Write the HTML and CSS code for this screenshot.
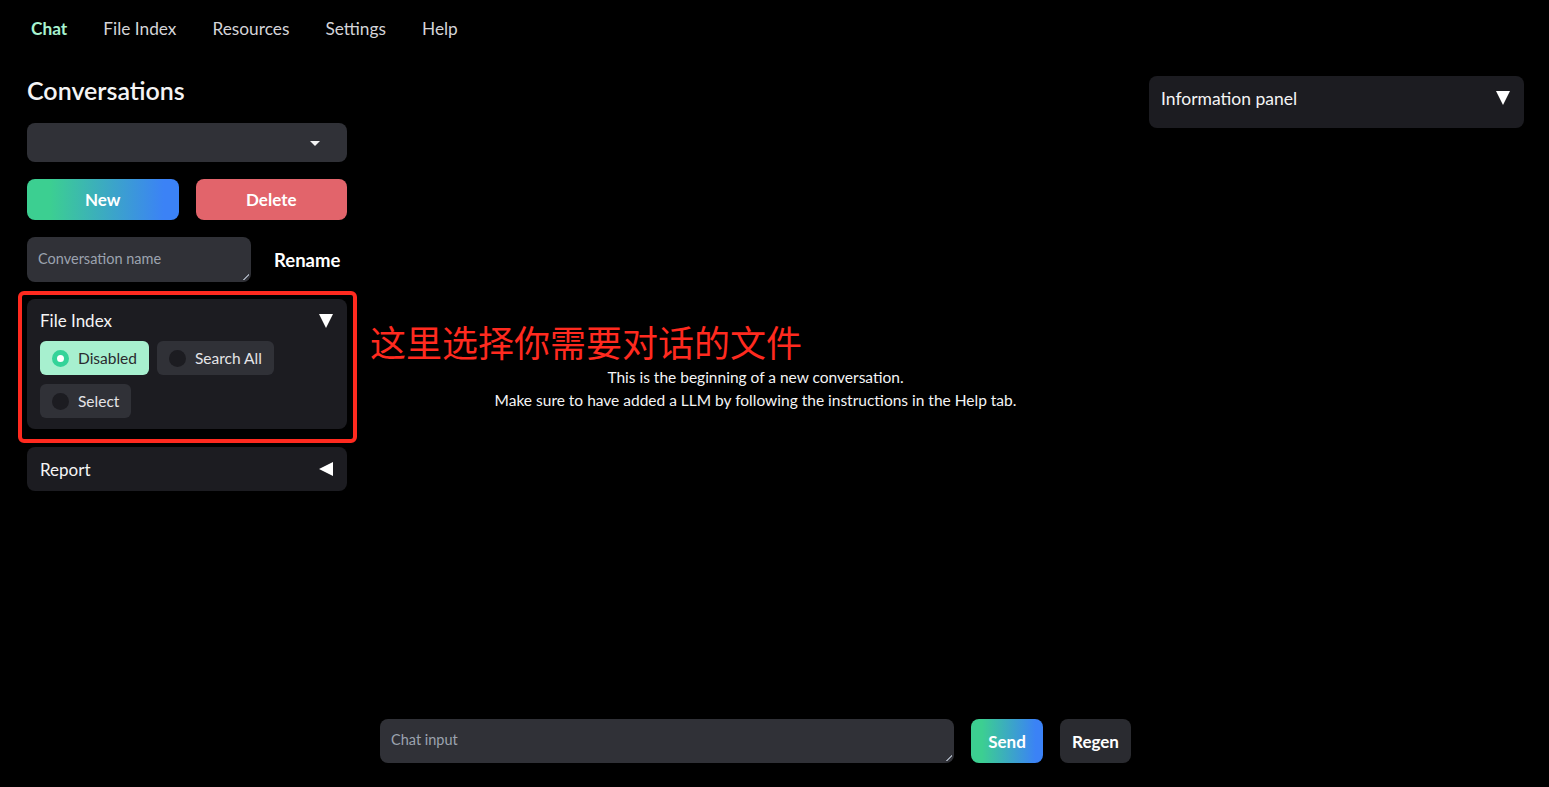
FILE: index.html
```html
<!DOCTYPE html>
<html lang="en">
<head>
<meta charset="utf-8">
<title>Chat</title>
<link rel="stylesheet" href="styles.css">
</head>
<body>
<nav class="tabs">
  <span class="tab active">Chat</span>
  <span class="tab">File Index</span>
  <span class="tab">Resources</span>
  <span class="tab">Settings</span>
  <span class="tab">Help</span>
</nav>
<main class="layout">
  <section class="left">
    <h2 class="heading">Conversations</h2>
    <div class="dropdown"><span class="caret"></span></div>
    <div class="btn-row">
      <button class="btn btn-new">New</button>
      <button class="btn btn-delete">Delete</button>
    </div>
    <div class="rename-row">
      <div class="textbox name-box">Conversation name<span class="grip"></span></div>
      <span class="rename">Rename</span>
    </div>
    <div class="highlight">
      <div class="panel file-panel">
        <div class="panel-head"><span>File Index</span><span class="tri-down"></span></div>
        <div class="radios">
          <span class="radio selected"><span class="dot"></span>Disabled</span>
          <span class="radio"><span class="dot"></span>Search All</span>
          <span class="radio"><span class="dot"></span>Select</span>
        </div>
      </div>
      <div class="annotation">这里选择你需要对话的文件</div>
    </div>
    <div class="panel report-panel">
      <div class="panel-head"><span>Report</span><span class="tri-left"></span></div>
    </div>
  </section>
  <section class="center">
    <div class="chat-area">
      <p>This is the beginning of a new conversation.</p>
      <p>Make sure to have added a LLM by following the instructions in the Help tab.</p>
    </div>
    <div class="chat-row">
      <div class="textbox chat-input">Chat input<span class="grip"></span></div>
      <button class="btn btn-send">Send</button>
      <button class="btn btn-regen">Regen</button>
    </div>
  </section>
  <section class="right">
    <div class="panel info-panel">
      <div class="panel-head"><span>Information panel</span><span class="tri-down"></span></div>
    </div>
  </section>
</main>
</body>
</html>
```
FILE: styles.css
```css
* { box-sizing: border-box; }
html, body { margin: 0; height: 100%; }
body {
  background: #000;
  color: #e5e7eb;
  font-family: "Lato", "Noto Sans CJK SC", sans-serif;
  overflow: hidden;
}
button { font-family: inherit; border: 0; cursor: pointer; }

.tabs {
  display: flex;
  gap: 36px;
  padding: 18px 0 0 31px;
  height: 58px;
  font-size: 17.3px;
}
.tab { color: #d4d4d8; line-height: 22px; }
.tab.active { color: #a7f3d0; font-weight: 700; }

.layout {
  display: flex;
  padding: 18px 25px 0 27px;
  height: 729px;
}
.left { width: 320px; flex: none; }
.center {
  flex: 1;
  min-width: 0;
  margin: 0 18px 0 33px;
  display: flex;
  flex-direction: column;
}
.right { width: 375px; flex: none; }

.heading {
  margin: 0 0 0;
  font-size: 25px;
  font-weight: 600;
  color: #f4f4f5;
  line-height: 28px;
}
.dropdown {
  margin-top: 19px;
  height: 39px;
  background: #303137;
  border-radius: 8px;
  position: relative;
}
.caret {
  position: absolute;
  right: 27px;
  top: 18px;
  border-left: 5px solid transparent;
  border-right: 5px solid transparent;
  border-top: 5px solid #f4f4f5;
}

.btn-row { display: flex; gap: 17px; margin-top: 17px; }
.btn {
  height: 41px;
  border-radius: 8px;
  color: #fff;
  font-size: 17px;
  font-weight: 700;
}
.btn-row .btn { flex: 1; }
.btn-new { background: linear-gradient(90deg, #3ccf91 15%, #3b82f6 90%); }
.btn-delete { background: #e2646b; }

.rename-row { display: flex; align-items: center; margin-top: 17px; }
.textbox {
  background: #303137;
  border-radius: 8px;
  color: #9ca3af;
  font-size: 14.5px;
  position: relative;
}
.name-box {
  width: 224px;
  height: 45px;
  padding: 13px 11px;
}
.grip {
  position: absolute;
  right: 2px;
  bottom: 2px;
  width: 6px;
  height: 6px;
  background: linear-gradient(135deg, transparent 45%, #9ca3af 45%, #9ca3af 60%, transparent 60%);
}
.rename {
  margin-left: 23px;
  font-size: 18.5px;
  font-weight: 700;
  color: #fff;
}

.highlight {
  position: relative;
  margin-top: 17px;
}
.highlight::before {
  content: "";
  position: absolute;
  left: -9px; right: -10px; top: -8px; bottom: -14px;
  border: 4px solid #ff2a1f;
  border-radius: 6px;
  pointer-events: none;
}
.annotation {
  position: absolute;
  left: 343px;
  top: 20px;
  white-space: nowrap;
  font-family: "Noto Sans CJK SC", sans-serif;
  font-size: 36px;
  line-height: 44px;
  color: #ff2a1f;
}

.panel {
  background: #1c1c21;
  border-radius: 8px;
}
.panel-head {
  display: flex;
  justify-content: space-between;
  align-items: center;
  font-size: 17px;
  color: #f4f4f5;
}
.tri-down {
  border-left: 7px solid transparent;
  border-right: 7px solid transparent;
  border-top: 14px solid #fff;
}
.tri-left {
  border-top: 7px solid transparent;
  border-bottom: 7px solid transparent;
  border-right: 14px solid #fff;
}
.file-panel { padding: 11px 14px 10px 13px; height: 130px; }
.radios {
  display: flex;
  flex-wrap: wrap;
  gap: 9px 8px;
  margin-top: 10px;
  width: 260px;
}
.radio {
  display: inline-flex;
  align-items: center;
  gap: 9px;
  height: 34px;
  padding: 0 12px 0 12px;
  background: #303137;
  border-radius: 6px;
  font-size: 15.5px;
  color: #e4e4e7;
}
.radio .dot {
  width: 17px;
  height: 17px;
  border-radius: 50%;
  background: #1c1c21;
}
.radio.selected { background: #a7f0cf; color: #2a2a2e; }
.radio.selected .dot {
  background: #fff;
  border: 5px solid #34d399;
}

.report-panel {
  margin-top: 18px;
  height: 44px;
  padding: 0 14px 0 13px;
  display: flex;
  flex-direction: column;
  justify-content: center;
}

.chat-area {
  flex: 1;
  text-align: center;
  padding-top: 290px;
  font-size: 15.5px;
  color: #f4f4f5;
}
.chat-area p { margin: 0; line-height: 23px; }
.chat-row {
  display: flex;
  align-items: center;
  gap: 17px;
  padding: 0 0 24px 0;
}
.chat-input {
  flex: 1;
  height: 44px;
  padding: 12px 11px;
}
.btn-send {
  width: 72px;
  height: 44px;
  background: linear-gradient(90deg, #3ccf91 15%, #3b82f6 90%);
}
.btn-regen {
  width: 71px;
  height: 44px;
  background: #2a2b30;
}

.info-panel {
  height: 52px;
  padding: 0 14px 0 12px;
  display: flex;
  flex-direction: column;
  justify-content: center;
}
.info-panel .panel-head { margin-top: -8px; font-size: 17.5px; }
```
